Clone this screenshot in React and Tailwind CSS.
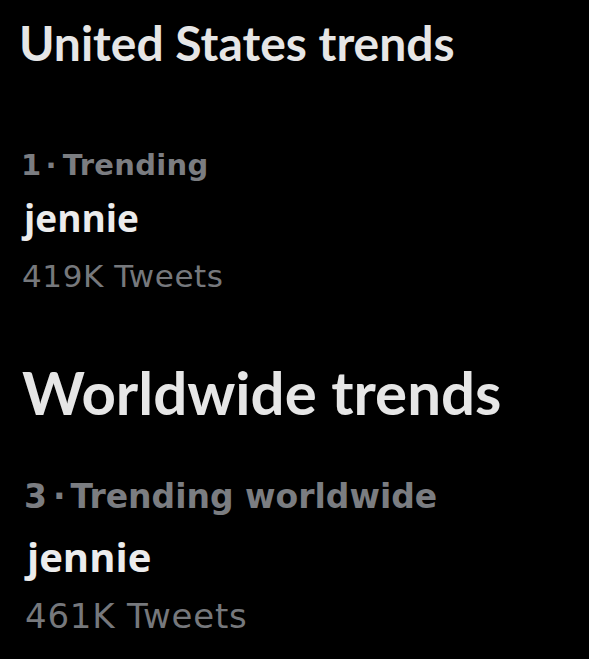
export default function App() {
  const head = "font-['Lato',_sans-serif] font-bold text-[#e6e6e6] leading-none";
  const sub = "font-['DejaVu_Sans',_sans-serif] font-bold text-[#7b7d81] leading-none flex";
  const name = "font-['Open_Sans',_sans-serif] font-bold text-[#ececec] leading-none";
  const count = "font-['DejaVu_Sans',_sans-serif] font-normal text-[#76787c] leading-none";
  return (
    <div className="w-[589px] h-[659px] bg-black overflow-hidden">
      <section className="pl-[21px] pt-[19px]">
        <h1 className={`${head} text-[48px] -ml-[2px]`}>United States trends</h1>
        <div className={`${sub} text-[29px] tracking-[0.3px] mt-[84px]`}>
          <span>1</span>
          <span className="ml-[4px] mr-[6px]">·</span>
          <span>Trending</span>
        </div>
        <div className={`${name} text-[37px] mt-[19px] pl-[3px]`}>jennie</div>
        <div className={`${count} text-[31px] tracking-[0.6px] mt-[25px] pl-[1px]`}>419K Tweets</div>
      </section>
      <section className="pl-[24px]">
        <h2 className={`${head} text-[60px] mt-[70px] -ml-[2px]`}>Worldwide trends</h2>
        <div className={`${sub} text-[33px] mt-[58px]`}>
          <span>3</span>
          <span className="ml-[6px] mr-[5px]">·</span>
          <span>Trending worldwide</span>
        </div>
        <div className={`${name} text-[40px] mt-[24px] pl-[3px]`}>jennie</div>
        <div className={`${count} text-[34px] tracking-[0.8px] mt-[22px] pl-[1px]`}>461K Tweets</div>
      </section>
    </div>
  );
}
